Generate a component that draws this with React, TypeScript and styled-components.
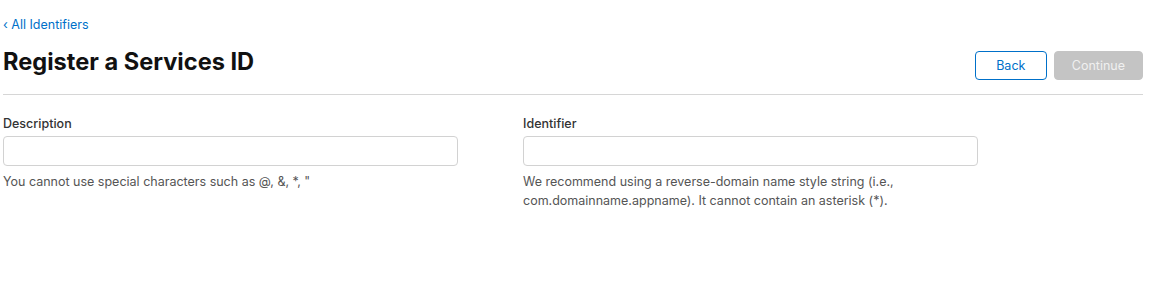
import React from 'react';
import styled, {createGlobalStyle} from 'styled-components';

const GlobalStyle = createGlobalStyle`
  body {
    margin: 0;
    background: #fff;
    font-family: Inter, "Liberation Sans", Arial, sans-serif;
    color: #1d1d1f;
  }
`;

const Page = styled.div`
  width: 1140px;
  padding: 13px 0 0 3px;
`;

const BackLink = styled.a`
  display: inline-block;
  font-size: 12.5px;
  line-height: 18px;
  color: #0070c9;
  text-decoration: none;
`;

const HeaderRow = styled.div`
  display: flex;
  align-items: center;
  justify-content: space-between;
  margin-top: 10px;
  padding-bottom: 14px;
  border-bottom: 1px solid #d6d6d6;
`;

const Title = styled.h1`
  margin: 0;
  font-size: 23.6px;
  line-height: 34px;
  font-weight: 700;
  color: #111;
`;

const Actions = styled.div`
  display: flex;
  gap: 7px;
  padding-top: 7px;
`;

const Button = styled.button<{ $primary?: boolean }>`
  height: 29px;
  min-width: 72px;
  padding: 0 17px;
  border-radius: 4px;
  font-family: inherit;
  font-size: 12.5px;
  border: 1px solid ${p => p.$primary ? '#c4c4c4' : '#0070c9'};
  background: ${p => p.$primary ? '#c4c4c4' : '#fff'};
  color: ${p => p.$primary ? '#f0f0f0' : '#0070c9'};
`;

const Form = styled.div`
  display: grid;
  grid-template-columns: 455px 455px;
  column-gap: 65px;
  margin-top: 20px;
`;

const Field = styled.div`
  display: flex;
  flex-direction: column;
`;

const Label = styled.label`
  font-size: 12.5px;
  line-height: 18px;
  font-weight: 500;
  color: #333;
`;

const Input = styled.input`
  box-sizing: border-box;
  width: 100%;
  height: 30px;
  margin-top: 3px;
  border: 1px solid #d2d2d2;
  border-radius: 4px;
  background: #fff;
`;

const Hint = styled.p`
  margin: 6px 0 0;
  font-size: 12.5px;
  line-height: 19px;
  color: #555;
`;

export default function App() {
  return (
    <>
      <GlobalStyle/>
      <Page>
        <BackLink href="#">‹ All Identifiers</BackLink>
        <HeaderRow>
          <Title>Register a Services ID</Title>
          <Actions>
            <Button>Back</Button>
            <Button $primary disabled>Continue</Button>
          </Actions>
        </HeaderRow>
        <Form>
          <Field>
            <Label>Description</Label>
            <Input/>
            <Hint>You cannot use special characters such as @, &amp;, *, "</Hint>
          </Field>
          <Field>
            <Label>Identifier</Label>
            <Input/>
            <Hint>We recommend using a reverse-domain name style string (i.e., com.domainname.appname). It cannot contain an asterisk (*).</Hint>
          </Field>
        </Form>
      </Page>
    </>
  );
}
